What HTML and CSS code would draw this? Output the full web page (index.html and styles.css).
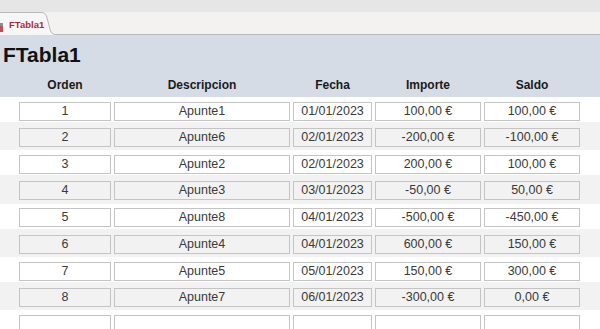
FILE: index.html
```html
<!DOCTYPE html>
<html lang="es">
<head>
<meta charset="utf-8">
<title>FTabla1</title>
<link rel="stylesheet" href="styles.css">
</head>
<body>
<div class="topbar"></div>
<div class="tabstrip">
  <div class="tab">
    <svg class="tab-shape" width="60" height="23" viewBox="0 0 60 23"><path d="M0.5 23 V3.5 Q0.5 0.5 3.5 0.5 H46 Q49 0.5 50.5 4 L54.5 19 Q56 22.5 59 22.5 H60" fill="#f7f7f7" stroke="#b9b9b9" stroke-width="1"/></svg>
    <span class="tab-icon"></span>
    <span class="tab-label">FTabla1</span>
  </div>
  <div class="tab-rest"></div>
</div>
<div class="form-header">
  <div class="form-title">FTabla1</div>
  <div class="cols labels">
    <div>Orden</div>
    <div>Descripcion</div>
    <div>Fecha</div>
    <div>Importe</div>
    <div>Saldo</div>
  </div>
</div>
<div class="detail">
  <div class="row odd cols"><div class="cell">1</div><div class="cell">Apunte1</div><div class="cell">01/01/2023</div><div class="cell">100,00 €</div><div class="cell">100,00 €</div></div>
  <div class="row even cols"><div class="cell">2</div><div class="cell">Apunte6</div><div class="cell">02/01/2023</div><div class="cell">-200,00 €</div><div class="cell">-100,00 €</div></div>
  <div class="row odd cols"><div class="cell">3</div><div class="cell">Apunte2</div><div class="cell">02/01/2023</div><div class="cell">200,00 €</div><div class="cell">100,00 €</div></div>
  <div class="row even cols"><div class="cell">4</div><div class="cell">Apunte3</div><div class="cell">03/01/2023</div><div class="cell">-50,00 €</div><div class="cell">50,00 €</div></div>
  <div class="row odd cols"><div class="cell">5</div><div class="cell">Apunte8</div><div class="cell">04/01/2023</div><div class="cell">-500,00 €</div><div class="cell">-450,00 €</div></div>
  <div class="row even cols"><div class="cell">6</div><div class="cell">Apunte4</div><div class="cell">04/01/2023</div><div class="cell">600,00 €</div><div class="cell">150,00 €</div></div>
  <div class="row odd cols"><div class="cell">7</div><div class="cell">Apunte5</div><div class="cell">05/01/2023</div><div class="cell">150,00 €</div><div class="cell">300,00 €</div></div>
  <div class="row even cols"><div class="cell">8</div><div class="cell">Apunte7</div><div class="cell">06/01/2023</div><div class="cell">-300,00 €</div><div class="cell">0,00 €</div></div>
  <div class="row odd cols"><div class="cell"></div><div class="cell"></div><div class="cell"></div><div class="cell"></div><div class="cell"></div></div>
</div>
</body>
</html>
```

FILE: styles.css
```css
* { box-sizing: border-box; }
html, body { margin: 0; padding: 0; }
body {
  width: 600px;
  height: 329px;
  overflow: hidden;
  background: #ffffff;
  font-family: "Liberation Sans", Arial, sans-serif;
  color: #333333;
}
.topbar {
  height: 12px;
  background: #e6e6e6;
}
.tabstrip {
  height: 23px;
  display: flex;
  background: #f3f2f1;
}
.tab {
  position: relative;
  width: 56px;
  height: 23px;
  display: flex;
  align-items: center;
  padding-left: 9px;
  padding-top: 2px;
}
.tab-shape {
  position: absolute;
  left: -4px;
  top: 0;
}
.tab-icon {
  position: absolute;
  left: 0;
  top: 11px;
  width: 3px;
  height: 9px;
  background: linear-gradient(#7b8fb0 0 30%, #c44a55 30% 100%);
}
.tab-label {
  position: relative;
  font-size: 9.5px;
  font-weight: bold;
  color: #b02a37;
}
.tab-rest {
  flex: 1;
  border-bottom: 1px solid #b9b9b9;
}
.form-header {
  height: 62px;
  background: #d6dce5;
}
.form-title {
  padding: 7px 0 0 3px;
  height: 33px;
  font-size: 21px;
  line-height: 26px;
  font-weight: bold;
  color: #111111;
}
.cols {
  display: grid;
  grid-template-columns: 92px 176px 79px 106px 96px;
  column-gap: 3px;
  padding-left: 19px;
}
.labels {
  padding-top: 10px;
  font-size: 12px;
  line-height: 14px;
  font-weight: bold;
  color: #1a1a1a;
  text-align: center;
}
.row.odd {
  height: 25px;
  padding-top: 4.67px;
  background: #ffffff;
}
.row.even {
  height: 28.33px;
  padding-top: 6px;
  background: #f2f2f2;
}
.cell {
  height: 19px;
  border: 1px solid #c4c4c4;
  font-size: 12.5px;
  line-height: 17px;
  text-align: center;
  color: #3a3a3a;
}
```
